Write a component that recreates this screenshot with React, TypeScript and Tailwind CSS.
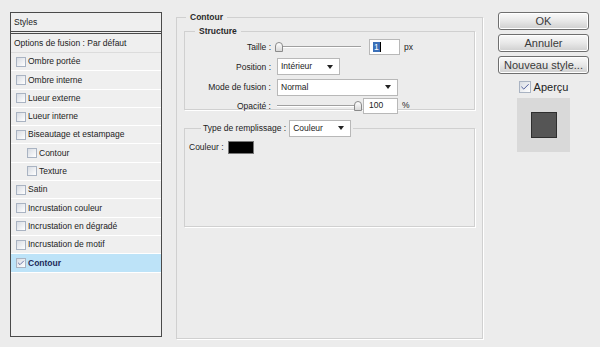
import { Check } from 'lucide-react';

const font = { fontFamily: '"Liberation Sans", Arial, sans-serif' };

type Row = { label: string; indent?: boolean; checked?: boolean };

const rows: Row[] = [
  { label: 'Ombre portée' },
  { label: 'Ombre interne' },
  { label: 'Lueur externe' },
  { label: 'Lueur interne' },
  { label: 'Biseautage et estampage' },
  { label: 'Contour', indent: true },
  { label: 'Texture', indent: true },
  { label: 'Satin' },
  { label: 'Incrustation couleur' },
  { label: 'Incrustation en dégradé' },
  { label: 'Incrustation de motif' },
  { label: 'Contour', checked: true },
];

function Box({ checked, size = 'w-[10px] h-[10px]' }: { checked?: boolean; size?: string }) {
  return (
    <span className={`${size} border border-[#a9b3c2] bg-gradient-to-br from-[#d8dce3] to-white flex items-center justify-center shrink-0`}>
      {checked && <Check size={10} strokeWidth={2} className="text-[#2b3c86]" />}
    </span>
  );
}

function Select({ value, width }: { value: string; width: string }) {
  return (
    <div className={`${width} h-[17px] bg-white border border-[#b8b8b8] flex items-center justify-between pl-[3px] pr-[6px]`}>
      <span>{value}</span>
      <span className="w-0 h-0 border-l-[3px] border-r-[3px] border-t-[4px] border-l-transparent border-r-transparent border-t-[#222]" />
    </div>
  );
}

function Slider({ pos }: { pos: 'start' | 'end' }) {
  return (
    <div className="relative w-[84px] h-[12px] flex items-center">
      <div className="w-full h-[2px] border-t border-[#a0a0a0] border-b border-b-white" />
      <div
        className={`absolute top-[1px] w-[8px] h-[10px] border border-[#8a8a8a] bg-gradient-to-b from-white to-[#d8d8d8] rounded-t-[4px] ${pos === 'start' ? 'left-[-2px]' : 'right-[-1px]'}`}
      />
    </div>
  );
}

function Button({ label }: { label: string }) {
  return (
    <div className="h-[18px] w-[91px] rounded-[3px] border border-[#6f6f6f] bg-gradient-to-b from-[#fafafa] via-[#e8e8e8] to-[#cfcfcf] flex items-center justify-center whitespace-nowrap text-[11px] text-[#3a3a3a] shadow-[inset_0_0_0_1px_#ffffff]">
      {label}
    </div>
  );
}

export default function App() {
  return (
    <div className="w-[600px] h-[347px] bg-[#ececec] text-[#222] text-[8.5px] flex pt-[12px] pl-[10px] overflow-hidden" style={font}>
      {/* liste des styles */}
      <div className="w-[152px] h-[325px] border border-[#4a4a4a] bg-[#efefef] flex flex-col">
        <div className="h-[21px] px-[3px] flex items-center border-b-[3px] border-double border-[#4a4a4a]">Styles</div>
        <div className="h-[19px] px-[3px] flex items-center border-b border-[#dcdcdc]">Options de fusion : Par défaut</div>
        {rows.map((r, i) => (
          <div
            key={i}
            className={`h-[18.3px] flex items-center gap-[2px] border-b border-white ${r.indent ? 'pl-[16px]' : 'pl-[5px]'} ${r.checked ? 'bg-[#bde3f8] font-bold text-[#1c2a5a]' : ''}`}
          >
            <Box checked={r.checked} />
            <span>{r.label}</span>
          </div>
        ))}
      </div>

      {/* panneau central */}
      <fieldset className="ml-[14px] mt-[-1px] w-[307px] h-[328px] border border-[#d0d0d0] shadow-[1px_1px_0_#ffffff] px-[7px] pb-[8px] flex flex-col">
        <legend className="ml-[2px] px-[4px] font-bold text-[#2a2a2a]">Contour</legend>
        <fieldset className="mt-[1px] h-[85px] border border-[#d0d0d0] shadow-[1px_1px_0_#ffffff]">
          <legend className="ml-[10px] px-[4px] font-bold text-[#2a2a2a]">Structure</legend>
          <div className="grid grid-cols-[86px_1fr] items-center gap-x-[6px]">
            <div className="text-right h-[19px] leading-[19px]">Taille :</div>
            <div className="flex items-center h-[19px]">
              <Slider pos="start" />
              <div className="ml-[8px] w-[31px] h-[16px] bg-white border border-[#b8b8b8] flex items-center pl-[3px]">
                <span className="bg-[#3a6fb8] text-white px-[1px] leading-[10px]">1</span>
                <span className="w-px h-[10px] bg-black" />
              </div>
              <span className="ml-[4px]">px</span>
            </div>
            <div className="text-right h-[20px] leading-[20px]">Position :</div>
            <div className="h-[20px] flex items-center"><Select value="Intérieur" width="w-[63px]" /></div>
            <div className="text-right h-[21px] leading-[21px]">Mode de fusion :</div>
            <div className="h-[21px] flex items-center"><Select value="Normal" width="w-[121px]" /></div>
            <div className="text-right h-[16px] leading-[16px]">Opacité :</div>
            <div className="flex items-center h-[16px]">
              <Slider pos="end" />
              <div className="ml-[2px] w-[35px] h-[16px] bg-white border border-[#b8b8b8] flex items-center pl-[5px]">100</div>
              <span className="ml-[4px]">%</span>
            </div>
          </div>
        </fieldset>

        <fieldset className="mt-[10px] h-[107px] border border-[#d0d0d0] shadow-[1px_1px_0_#ffffff] px-[4px]">
          <legend className="ml-[12px] px-[2px] flex items-center gap-[3px]">
            <span>Type de remplissage :</span>
            <Select value="Couleur" width="w-[62px]" />
          </legend>
          <div className="flex items-center gap-[4px] mt-[4px]">
            <span>Couleur :</span>
            <span className="w-[26px] h-[13px] bg-black border border-[#777]" />
          </div>
        </fieldset>
      </fieldset>

      {/* boutons */}
      <div className="ml-[15px] flex flex-col items-center gap-[4px] w-[91px]">
        <Button label="OK" />
        <Button label="Annuler" />
        <Button label="Nouveau style..." />
        <div className="flex items-center gap-[3px] text-[11px] text-[#222] mt-[1px]">
          <Box checked size="w-[12px] h-[12px]" />
          <span>Aperçu</span>
        </div>
        <div className="w-[53px] h-[54px] bg-[#d9d9d9] flex items-center justify-center mt-[-2px]">
          <div className="w-[26px] h-[26px] bg-[#555555] border border-[#2e2e2e]" />
        </div>
      </div>
    </div>
  );
}
